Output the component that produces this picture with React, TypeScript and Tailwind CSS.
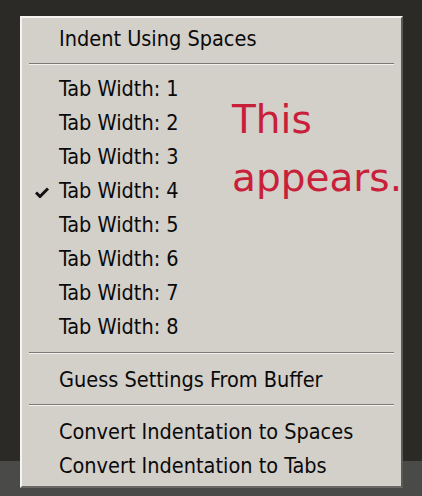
import React from "react";

const Sep = ({ top, bottom }: { top: string; bottom: string }) => (
  <div className={`px-[7px] ${top} ${bottom}`}>
    <div className="h-px bg-[#7c7a76]" />
    <div className="h-px bg-[#f4f2ee]" />
  </div>
);

const Item = ({ label, checked }: { label: string; checked?: boolean }) => (
  <div className="relative h-[34px] flex items-center pl-[37px] text-[#0a0a0a]">
    {checked && (
      <svg className="absolute left-[13px] top-[13px]" width="14" height="11" viewBox="0 0 14 11">
        <path d="M1 5.5 L5 9.5 L13 1.5" stroke="#111" strokeWidth="3" fill="none" />
      </svg>
    )}
    <span>{label}</span>
  </div>
);

export default function App() {
  return (
    <div
      className="w-[422px] h-[496px] relative overflow-hidden"
      style={{ fontFamily: '"DejaVu Sans Condensed", "DejaVu Sans", sans-serif' }}
    >
      <div className="flex flex-col h-full">
        <div className="h-[461px] bg-[#2b2a27]" />
        <div className="flex-1 bg-[#4a4a48]" />
      </div>
      <div className="absolute left-[20px] top-[16px] w-[383px] h-[472px] bg-[#d3cfc9] border-l-2 border-t-2 border-[#f6f4f0] border-r-2 border-b-2 border-r-[#5c5a56] border-b-[#6a6864] text-[21.5px] pt-[4px]">
        <Item label="Indent Using Spaces" />
        <Sep top="pt-[7px]" bottom="pb-[7px]" />
        {[1, 2, 3, 4, 5, 6, 7, 8].map((n) => (
          <Item key={n} label={`Tab Width: ${n}`} checked={n === 4} />
        ))}
        <Sep top="pt-[8px]" bottom="pb-[9px]" />
        <Item label="Guess Settings From Buffer" />
        <Sep top="pt-[7px]" bottom="pb-[9px]" />
        <Item label="Convert Indentation to Spaces" />
        <Item label="Convert Indentation to Tabs" />
        <div
          className="absolute left-[210px] top-[73px] text-[#c9203a] text-[39px] leading-[58px]"
          style={{ fontFamily: '"DejaVu Sans", sans-serif' }}
        >
          <div>This</div>
          <div>appears.</div>
        </div>
      </div>
    </div>
  );
}
